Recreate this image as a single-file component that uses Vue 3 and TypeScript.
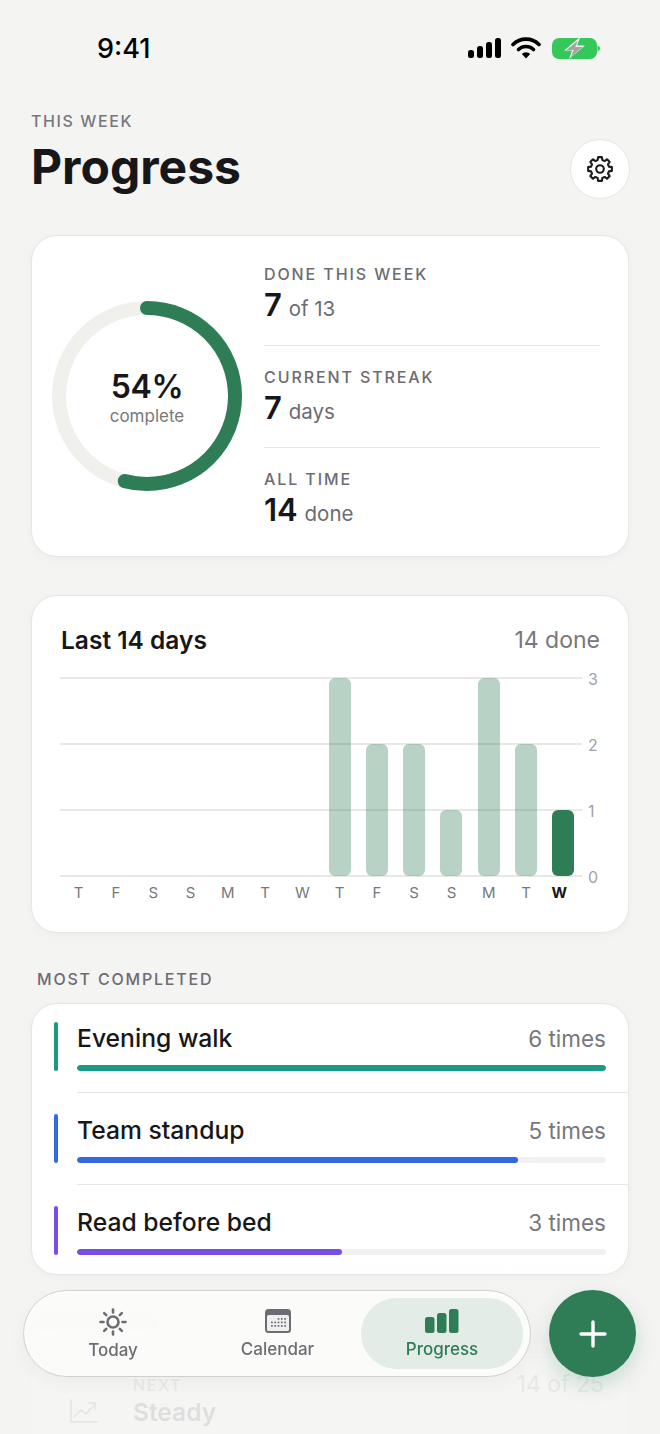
<script setup lang="ts">
// Weekly progress screen: summary ring, 14-day bar chart, most-completed list, floating tab bar.
interface Stat { label: string; value: string; unit: string }
interface Habit { name: string; times: number; color: string }

const stats: Stat[] = [
  { label: 'DONE THIS WEEK', value: '7', unit: 'of 13' },
  { label: 'CURRENT STREAK', value: '7', unit: 'days' },
  { label: 'ALL TIME', value: '14', unit: 'done' },
]

const days = [
  { d: 'T', n: 0 }, { d: 'F', n: 0 }, { d: 'S', n: 0 }, { d: 'S', n: 0 }, { d: 'M', n: 0 },
  { d: 'T', n: 0 }, { d: 'W', n: 0 }, { d: 'T', n: 3 }, { d: 'F', n: 2 }, { d: 'S', n: 2 },
  { d: 'S', n: 1 }, { d: 'M', n: 3 }, { d: 'T', n: 2 }, { d: 'W', n: 1 },
]
const ticks = [3, 2, 1, 0]
const plotHeight = 198

const habits: Habit[] = [
  { name: 'Evening walk', times: 6, color: '#1a9a84' },
  { name: 'Team standup', times: 5, color: '#3468e0' },
  { name: 'Read before bed', times: 3, color: '#7650e6' },
]

// ring geometry: 54% of the circumference, drawn from 12 o'clock
const radius = 88
const circumference = 2 * Math.PI * radius
const ringDash = `${circumference * 0.54} ${circumference}`

// eight-toothed cog outline, centred on 14,14
function cogPath(): string {
  const pt = (r: number, deg: number): string => {
    const a = (deg * Math.PI) / 180
    return `${(14 + r * Math.cos(a)).toFixed(2)} ${(14 + r * Math.sin(a)).toFixed(2)}`
  }
  let d = ''
  for (let i = 0; i < 8; i++) {
    const c = i * 45 - 90
    d += `${i ? 'L' : 'M'}${pt(9.2, c - 15)} L${pt(12, c - 9)} L${pt(12, c + 9)} L${pt(9.2, c + 15)} `
  }
  return d + 'Z'
}
const cog = cogPath()
</script>

<template>
  <div class="screen">
    <div class="status">
      <span class="clock">9:41</span>
      <div class="status-icons">
        <svg class="signal" width="33" height="20" viewBox="0 0 33 20">
          <rect x="0" y="12" width="6" height="8" rx="2.5" />
          <rect x="9" y="8" width="6" height="12" rx="2.5" />
          <rect x="18" y="4" width="6" height="16" rx="2.5" />
          <rect x="27" y="0" width="6" height="20" rx="2.5" />
        </svg>
        <svg class="wifi" width="30" height="22" viewBox="0 0 30 22" fill="none" stroke="#000" stroke-width="3.6" stroke-linecap="round">
          <path d="M2 7.5a18.5 18.5 0 0 1 26 0" />
          <path d="M7.5 12.5a11 11 0 0 1 15 0" />
          <path d="M15 21.6l-4.2-4.6a5.8 5.8 0 0 1 8.4 0z" fill="#000" stroke="none" />
        </svg>
        <svg width="48" height="21" viewBox="0 0 48 21">
          <rect x="0" y="0" width="45" height="21" rx="7" fill="#34c759" />
          <path d="M45.500 7.500c1.500.4 2.500 1.600 2.500 3s-1 2.600-2.500 3z" fill="#34c759" />
          <path d="M27 0 12 12.500h8L17 21l16-13.500h-8l3-7.500z" fill="#f4f4f2" />
          <path d="M26 2.500 14.500 12h7.200L19 19l11.500-10h-7.200z" fill="#a2a5a2" />
        </svg>
      </div>
    </div>

    <header class="head">
      <div>
        <div class="eyebrow">THIS WEEK</div>
        <h1 class="title">Progress</h1>
      </div>
      <button class="gear" aria-label="Settings">
        <svg width="28" height="28" viewBox="0 0 28 28" fill="none" stroke="#1c1c1f" stroke-width="2.100" stroke-linejoin="round">
          <path :d="cog" />
          <circle cx="14" cy="14" r="3.800" />
        </svg>
      </button>
    </header>

    <section class="card summary">
      <div class="ring">
        <svg width="190" height="190" viewBox="0 0 190 190">
          <circle cx="95" cy="95" :r="radius" fill="none" stroke="#f0f0ed" stroke-width="14" />
          <circle
            cx="95"
            cy="95"
            :r="radius"
            fill="none"
            stroke="#2f7d57"
            stroke-width="14"
            stroke-linecap="round"
            :stroke-dasharray="ringDash"
            transform="rotate(-90 95 95)"
          />
        </svg>
        <div class="ring-text">
          <div class="ring-pct">54%</div>
          <div class="ring-sub">complete</div>
        </div>
      </div>
      <div class="stats">
        <div v-for="s in stats" :key="s.label" class="stat">
          <div class="stat-label">{{ s.label }}</div>
          <div class="stat-value"><b>{{ s.value }}</b> <span>{{ s.unit }}</span></div>
        </div>
      </div>
    </section>

    <section class="card chart-card">
      <div class="chart-head">
        <span class="chart-title">Last 14 days</span>
        <span class="chart-total">14 done</span>
      </div>
      <div class="plot" :style="{ height: plotHeight + 'px' }">
        <div class="grid">
          <div v-for="t in ticks" :key="t" class="tick">
            <i></i><span>{{ t }}</span>
          </div>
        </div>
        <div class="bars">
          <div v-for="(day, i) in days" :key="i" class="bar-slot">
            <div
              v-if="day.n"
              class="bar"
              :class="{ today: i === days.length - 1 }"
              :style="{ height: (day.n / 3) * plotHeight + 'px' }"
            ></div>
          </div>
        </div>
      </div>
      <div class="day-row">
        <span v-for="(day, i) in days" :key="i" :class="{ now: i === days.length - 1 }">{{ day.d }}</span>
      </div>
    </section>

    <h2 class="section-label">MOST COMPLETED</h2>
    <section class="card list">
      <div v-for="h in habits" :key="h.name" class="row">
        <div class="accent" :style="{ background: h.color }"></div>
        <div class="row-body">
          <div class="row-top">
            <span class="row-name">{{ h.name }}</span>
            <span class="row-times">{{ h.times }} times</span>
          </div>
          <div class="track">
            <div class="fill" :style="{ width: (h.times / 6) * 100 + '%', background: h.color }"></div>
          </div>
        </div>
      </div>
    </section>

    <h2 class="section-label ghost-label">MILESTONES</h2>
    <section class="card ghost">
      <div class="ghost-icon">
        <svg width="28" height="24" viewBox="0 0 28 24" fill="none" stroke="#555" stroke-width="1.600" stroke-linecap="round" stroke-linejoin="round">
          <path d="M1 1v22h26" />
          <path d="M4 18l7-7 5 4 9-10" />
          <path d="M19 4h6v6" />
        </svg>
      </div>
      <div class="ghost-text">
        <div class="ghost-next">NEXT</div>
        <div class="ghost-name">Steady</div>
      </div>
      <div class="ghost-count">14 of 25</div>
    </section>

    <div class="fade"></div>

    <div class="dock">
      <nav class="tabs">
        <div class="tab tab-today">
          <svg width="30" height="30" viewBox="0 0 30 30" fill="none" stroke="#6c6c72" stroke-width="2.600" stroke-linecap="round">
            <circle cx="15" cy="15" r="5.500" />
            <path d="M15 2.500v3M15 24.500v3M2.500 15h3M24.500 15h3M6.200 6.200l2 2M21.800 21.800l2 2M6.200 23.800l2-2M21.800 8.200l2-2" />
          </svg>
          <span>Today</span>
        </div>
        <div class="tab tab-calendar">
          <svg width="26" height="24" viewBox="0 0 26 24">
            <rect width="26" height="24" rx="3.500" fill="#6c6c72" />
            <rect x="2" y="6" width="22" height="16" rx="1.500" fill="#efefee" />
            <g fill="#6c6c72">
              <rect v-for="c in 13" :key="c" :x="6 + ((c + 1) % 5) * 3.300" :y="9 + Math.floor((c + 1) / 5) * 3.500" width="1.800" height="1.800" rx="0.600" />
            </g>
          </svg>
          <span>Calendar</span>
        </div>
        <div class="tab active">
          <svg width="34" height="24" viewBox="0 0 34 24" fill="#2f7d57">
            <rect x="0" y="8" width="9.500" height="16" rx="2.500" />
            <rect x="12" y="4" width="9.500" height="20" rx="2.500" />
            <rect x="24" y="0" width="9.500" height="24" rx="2.500" />
          </svg>
          <span>Progress</span>
        </div>
      </nav>
      <button class="fab" aria-label="Add">
        <svg width="30" height="30" viewBox="0 0 30 30" stroke="#fff" stroke-width="3.400" stroke-linecap="round">
          <path d="M15 3v24M3 15h24" />
        </svg>
      </button>
    </div>
  </div>
</template>

<style>
html, body { margin: 0; background: #f4f4f2; }
</style>

<style scoped>
* { box-sizing: border-box; }
.screen {
  position: relative;
  width: 660px;
  height: 1434px;
  overflow: hidden;
  padding: 0 31px;
  background: #f4f4f2;
  color: #17171a;
  font-family: Inter, "Liberation Sans", sans-serif;
}

.status {
  height: 108px;
  padding: 30px 29px 0 66px;
  display: flex;
  justify-content: space-between;
  align-items: flex-start;
}
.clock { font-size: 27px; font-weight: 500; line-height: 38px; color: #000; }
.status-icons { display: flex; align-items: flex-start; gap: 11px; padding-top: 8px; }
.signal { margin-right: -1px; }
.wifi { margin-top: -1px; }

.head { display: flex; justify-content: space-between; align-items: flex-start; height: 91px; margin-right: -1px; }
.eyebrow { font-size: 16px; font-weight: 500; letter-spacing: 1.600px; color: #77777c; line-height: 26px; }
.title { margin: 1px 0 0; font-size: 48px; font-weight: 700; line-height: 64px; }
.gear {
  align-self: flex-end;
  width: 60px;
  height: 60px;
  border-radius: 50%;
  border: 1px solid #e6e6e4;
  background: #fff;
  display: flex;
  align-items: center;
  justify-content: center;
  padding: 0;
}

.card {
  background: #fff;
  border: 1px solid #e6e6e4;
  border-radius: 26px;
  box-shadow: 0 2px 8px rgba(0, 0, 0, 0.03);
}

.summary {
  margin-top: 36px;
  height: 322px;
  display: flex;
  align-items: center;
  padding: 0 28px 0 20px;
}
.ring { position: relative; width: 190px; height: 190px; flex: none; }
.ring-text {
  position: absolute;
  inset: 0;
  display: flex;
  flex-direction: column;
  align-items: center;
  justify-content: center;
}
.ring-pct { font-size: 32px; font-weight: 600; letter-spacing: -0.4px; line-height: 36px; margin-top: 4px; }
.ring-sub { font-size: 17px; color: #77777c; line-height: 22px; }

.stats { flex: 1; margin-left: 22px; }
.stat { height: 102px; padding-top: 21px; border-top: 1px solid #e6e6e6; }
.stat:first-child { border-top: 0; }
.stat-label { font-size: 16px; font-weight: 500; letter-spacing: 1.900px; color: #6c6c72; line-height: 20px; }
.stat-value { margin-top: 2px; line-height: 38px; color: #6c6c72; font-size: 20.500px; }
.stat-value b { font-size: 31px; font-weight: 600; color: #17171a; margin-right: 1px; }

.chart-card { margin-top: 38px; height: 338px; padding: 24px 28px 0 28px; }
.chart-head { display: flex; justify-content: space-between; align-items: center; height: 40px; }
.chart-title { font-size: 24.500px; font-weight: 600; margin-left: 1px; }
.chart-total { font-size: 23px; color: #77777c; }
.plot { position: relative; margin-top: 18px; width: 522px; }
.grid { position: absolute; inset: 0 -18px 0 0; display: flex; flex-direction: column; justify-content: space-between; }
.tick { height: 0; display: flex; align-items: center; }
.tick i { flex: 1; height: 2px; background: #e8e8e6; }
.tick span { width: 18px; padding-left: 6px; font-size: 16px; color: #a2a2a6; line-height: 20px; position: relative; top: 1px; }
.bars { position: absolute; inset: 0; display: flex; align-items: flex-end; }
.bar-slot { flex: 1; display: flex; justify-content: center; }
.bar { width: 22px; border-radius: 6px; background: rgba(47, 125, 87, 0.34); }
.bar.today { background: #2f7d57; }
.day-row { display: flex; width: 522px; margin-top: 7px; }
.day-row span { flex: 1; text-align: center; font-size: 15px; line-height: 20px; color: #77777c; }
.day-row .now { color: #17171a; font-weight: 700; position: relative; left: -4px; }

.section-label {
  margin: 36px 0 0 6px;
  font-size: 16px;
  font-weight: 500;
  letter-spacing: 1.800px;
  line-height: 20px;
  color: #6c6c72;
}

.list { margin-top: 14px; height: 272px; overflow: hidden; padding-left: 22px; }
.row { display: flex; height: 92px; padding-top: 21px; }
.row:first-child { height: 89px; padding-top: 18px; }
.accent { width: 4px; height: 49px; border-radius: 2px; flex: none; }
.row-body { flex: 1; margin-left: 19px; border-bottom: 1px solid #e6e6e6; padding-right: 22px; }
.row:last-child .row-body { border-bottom: 0; }
.row-top { display: flex; justify-content: space-between; align-items: center; height: 32px; }
.row-name { font-size: 24.700px; font-weight: 500; }
.row-times { font-size: 22.500px; color: #77777c; }
.track { margin-top: 11px; height: 6px; border-radius: 3px; background: #f1f1f0; overflow: hidden; }
.fill { height: 100%; border-radius: 3px; }

.ghost-label { margin-top: 37px; }
.ghost { margin-top: 20px; height: 120px; display: flex; align-items: flex-start; padding: 22px 24px 0 38px; }
.ghost-icon { margin-top: 24px; }
.ghost-text { margin-left: 35px; flex: 1; }
.ghost-next { font-size: 16px; font-weight: 500; letter-spacing: 1.600px; color: #77777c; line-height: 20px; }
.ghost-name { font-size: 24.500px; font-weight: 600; color: #17171a; line-height: 34px; }
.ghost-count { font-size: 23px; color: #77777c; margin-top: -5px; }

.fade {
  position: absolute;
  left: 0;
  right: 0;
  bottom: 0;
  height: 170px;
  background: linear-gradient(to bottom, rgba(244, 244, 242, 0), rgba(244, 244, 242, 0.9) 45%, rgba(244, 244, 242, 0.9));
}

.dock { position: absolute; left: 23px; top: 1290px; display: flex; gap: 18px; }
.tabs {
  width: 508px;
  height: 87px;
  border-radius: 44px;
  border: 1px solid #d0d0ce;
  background: rgba(251, 251, 250, 0.94);
  backdrop-filter: blur(6px);
  box-shadow: inset 0 2px 3px rgba(255, 255, 255, 0.9), 0 6px 18px rgba(0, 0, 0, 0.04);
  display: grid;
  grid-template-columns: 166px 165px 162px;
  padding: 7px 7px 7px 6px;
}
.tab {
  display: flex;
  flex-direction: column;
  align-items: center;
  justify-content: center;
  gap: 6px;
  padding-top: 1px;
  color: #6c6c72;
  font-size: 17px;
  font-weight: 500;
  line-height: 20px;
  border-radius: 36px;
}
.tab-today { gap: 3px; padding-top: 0; }
.tab-calendar { padding-right: 2px; }
.tab.active { background: #e3ece6; color: #2f7d57; }
.fab {
  width: 87px;
  height: 87px;
  border-radius: 50%;
  border: 0;
  padding: 0;
  background: #2f7d57;
  box-shadow: 0 8px 20px rgba(47, 125, 87, 0.22);
  display: flex;
  align-items: center;
  justify-content: center;
}
</style>
